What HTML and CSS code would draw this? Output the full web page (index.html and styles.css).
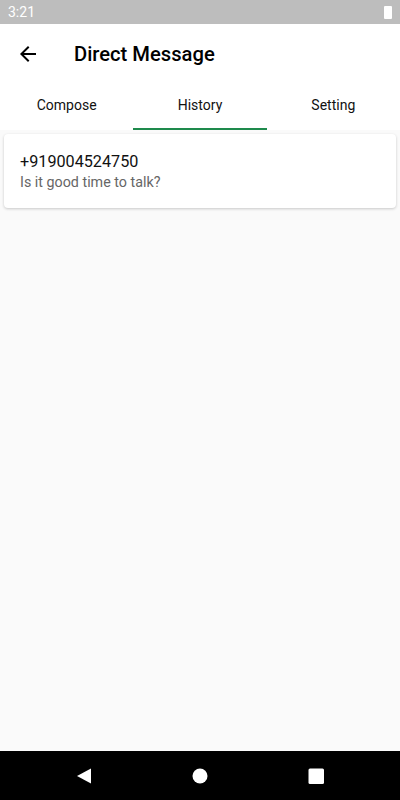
FILE: index.html
```html
<!DOCTYPE html>
<html>
  <head>
    <meta charset="UTF-8">
    <title>Direct Message</title>
    <link rel="stylesheet" href="styles.css">
  </head>
  <body>
    <div class="status-bar">
      <span class="time">3:21</span>
      <span class="battery"></span>
    </div>
    <header class="app-bar">
      <div class="toolbar">
        <svg class="back" width="24" height="24" viewBox="0 0 24 24">
          <path d="M20 11H7.83l5.59-5.59L12 4l-8 8 8 8 1.41-1.41L7.83 13H20v-2z" fill="#000"/>
        </svg>
        <h1>Direct Message</h1>
      </div>
      <nav class="tabs">
        <div class="tab">Compose</div>
        <div class="tab active">History</div>
        <div class="tab">Setting</div>
      </nav>
    </header>
    <main class="content">
      <div class="card">
        <div class="number">+919004524750</div>
        <div class="message">Is it good time to talk?</div>
      </div>
    </main>
    <footer class="nav-bar">
      <svg width="16" height="16" viewBox="0 0 16 16"><path d="M15 0.5v15L1 8z" fill="#fff"/></svg>
      <svg width="16" height="16" viewBox="0 0 16 16"><circle cx="8" cy="8" r="7.5" fill="#fff"/></svg>
      <svg width="16" height="16" viewBox="0 0 16 16"><rect x="0.5" y="0.5" width="15.5" height="15.5" rx="1.5" fill="#fff"/></svg>
    </footer>
  </body>
</html>
```
FILE: styles.css
```css
html {
  font-family: Roboto, "Liberation Sans", sans-serif;
}
body {
  margin: 0;
  width: 400px;
  height: 800px;
  display: flex;
  flex-direction: column;
  background: #fafafa;
}
.status-bar {
  height: 24px;
  background: #bdbdbd;
  display: flex;
  align-items: center;
  justify-content: space-between;
  padding: 0 8px;
  color: #fff;
  font-size: 14px;
}
.battery {
  width: 8px;
  height: 13px;
  background: #fff;
  border-radius: 1px;
  margin-top: 1px;
}
.app-bar {
  background: #fff;
}
.toolbar {
  height: 56px;
  display: flex;
  align-items: center;
  padding: 3px 16px 0;
  box-sizing: border-box;
}
.toolbar h1 {
  margin: 0 0 0 34px;
  font-size: 20.2px;
  font-weight: 500;
  color: #000;
}
.tabs {
  display: flex;
  height: 50px;
}
.tab {
  flex: 1;
  display: flex;
  align-items: center;
  justify-content: center;
  font-size: 14px;
  font-weight: 400;
  color: #111;
  box-sizing: border-box;
}
.tab.active {
  border-bottom: 2px solid #1e8a4c;
  padding-top: 2px;
}
.content {
  flex: 1;
  padding: 4px;
}
.card {
  background: #fff;
  border-radius: 4px;
  box-shadow: 0 1px 3px rgba(0, 0, 0, 0.2);
  padding: 17px 16px 15px;
}
.number {
  font-size: 16.2px;
  color: #111;
  line-height: 21px;
}
.message {
  font-size: 14.3px;
  color: #666;
  line-height: 21px;
}
.nav-bar {
  height: 49px;
  background: #000;
  display: flex;
  align-items: center;
  justify-content: center;
  gap: 100px;
}
```
